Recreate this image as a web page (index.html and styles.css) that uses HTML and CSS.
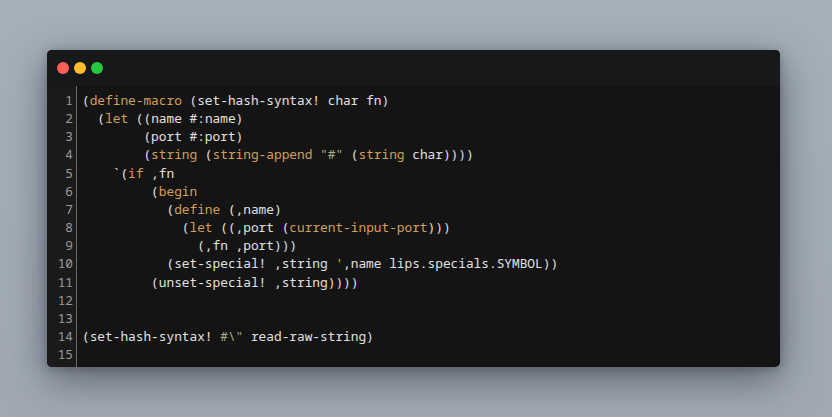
FILE: index.html
```html
<!DOCTYPE html>
<html>
<head>
<meta charset="utf-8">
<link rel="stylesheet" href="styles.css">
</head>
<body>
<div class="stage">
  <div class="window">
    <div class="titlebar">
      <span class="dot red"></span>
      <span class="dot yellow"></span>
      <span class="dot green"></span>
    </div>
    <div class="editor">
      <div class="gutter">
<div>1</div><div>2</div><div>3</div><div>4</div><div>5</div><div>6</div><div>7</div><div>8</div><div>9</div><div>10</div><div>11</div><div>12</div><div>13</div><div>14</div><div>15</div>
      </div>
<pre class="code"><code>(<span class="k">define-macro</span> (set-hash-syntax! char fn)
  (<span class="k">let</span> ((name #:name)
        (port #:port)
        (<span class="k">string</span> (<span class="k">string-append</span> <span class="s">"#"</span> (<span class="k">string</span> char))))
    `(<span class="k">if</span> ,fn
         (<span class="k">begin</span>
           (<span class="k">define</span> (,name)
             (<span class="k">let</span> ((,port (<span class="k">current-input-port</span>)))
               (,fn ,port)))
           (set-special! ,string <span class="q">'</span>,name lips.specials.SYMBOL))
         (unset-special! ,string))))


(set-hash-syntax! <span class="s">#\"</span> read-raw-string)
</code></pre>
    </div>
  </div>
</div>
</body>
</html>
```
FILE: styles.css
```css
html, body {
  margin: 0;
  padding: 0;
}
body {
  width: 832px;
  height: 417px;
  overflow: hidden;
  background: linear-gradient(180deg, #a6b0ba 0%, #a0a9b3 100%);
}
.stage {
  padding: 50px 52px 50px 47px;
}
.window {
  width: 733px;
  height: 317px;
  background: #141414;
  border-radius: 5px;
  overflow: hidden;
  box-shadow: 0 12px 40px rgba(30, 38, 50, 0.55), 0 2px 10px rgba(30, 38, 50, 0.3);
  display: flex;
  flex-direction: column;
}
.titlebar {
  height: 36px;
  background: #17181a;
  display: flex;
  align-items: center;
  gap: 5px;
  padding-left: 10px;
  flex: none;
}
.dot {
  width: 12px;
  height: 12px;
  border-radius: 50%;
  display: block;
}
.red { background: #ff5f57; }
.yellow { background: #febc2e; }
.green { background: #28c840; }
.editor {
  flex: 1;
  display: flex;
  font-family: "Noto Sans Mono", "DejaVu Sans Mono", monospace;
  font-size: 12.8px;
  line-height: 18.15px;
}
.gutter {
  width: 30px;
  background: #1a1a1a;
  border-right: 1px solid #6a6a6a;
  color: #9a9a9a;
  text-align: right;
  padding: 5px 3px 0 0;
  box-sizing: border-box;
}
.code {
  margin: 0;
  padding: 5px 0 0 5px;
  color: #e2e2e2;
  font: inherit;
}
.code code {
  font: inherit;
}
.k { color: #d3a05a; }
.s { color: #a4ad83; }
.q { color: #f0c000; }
```
